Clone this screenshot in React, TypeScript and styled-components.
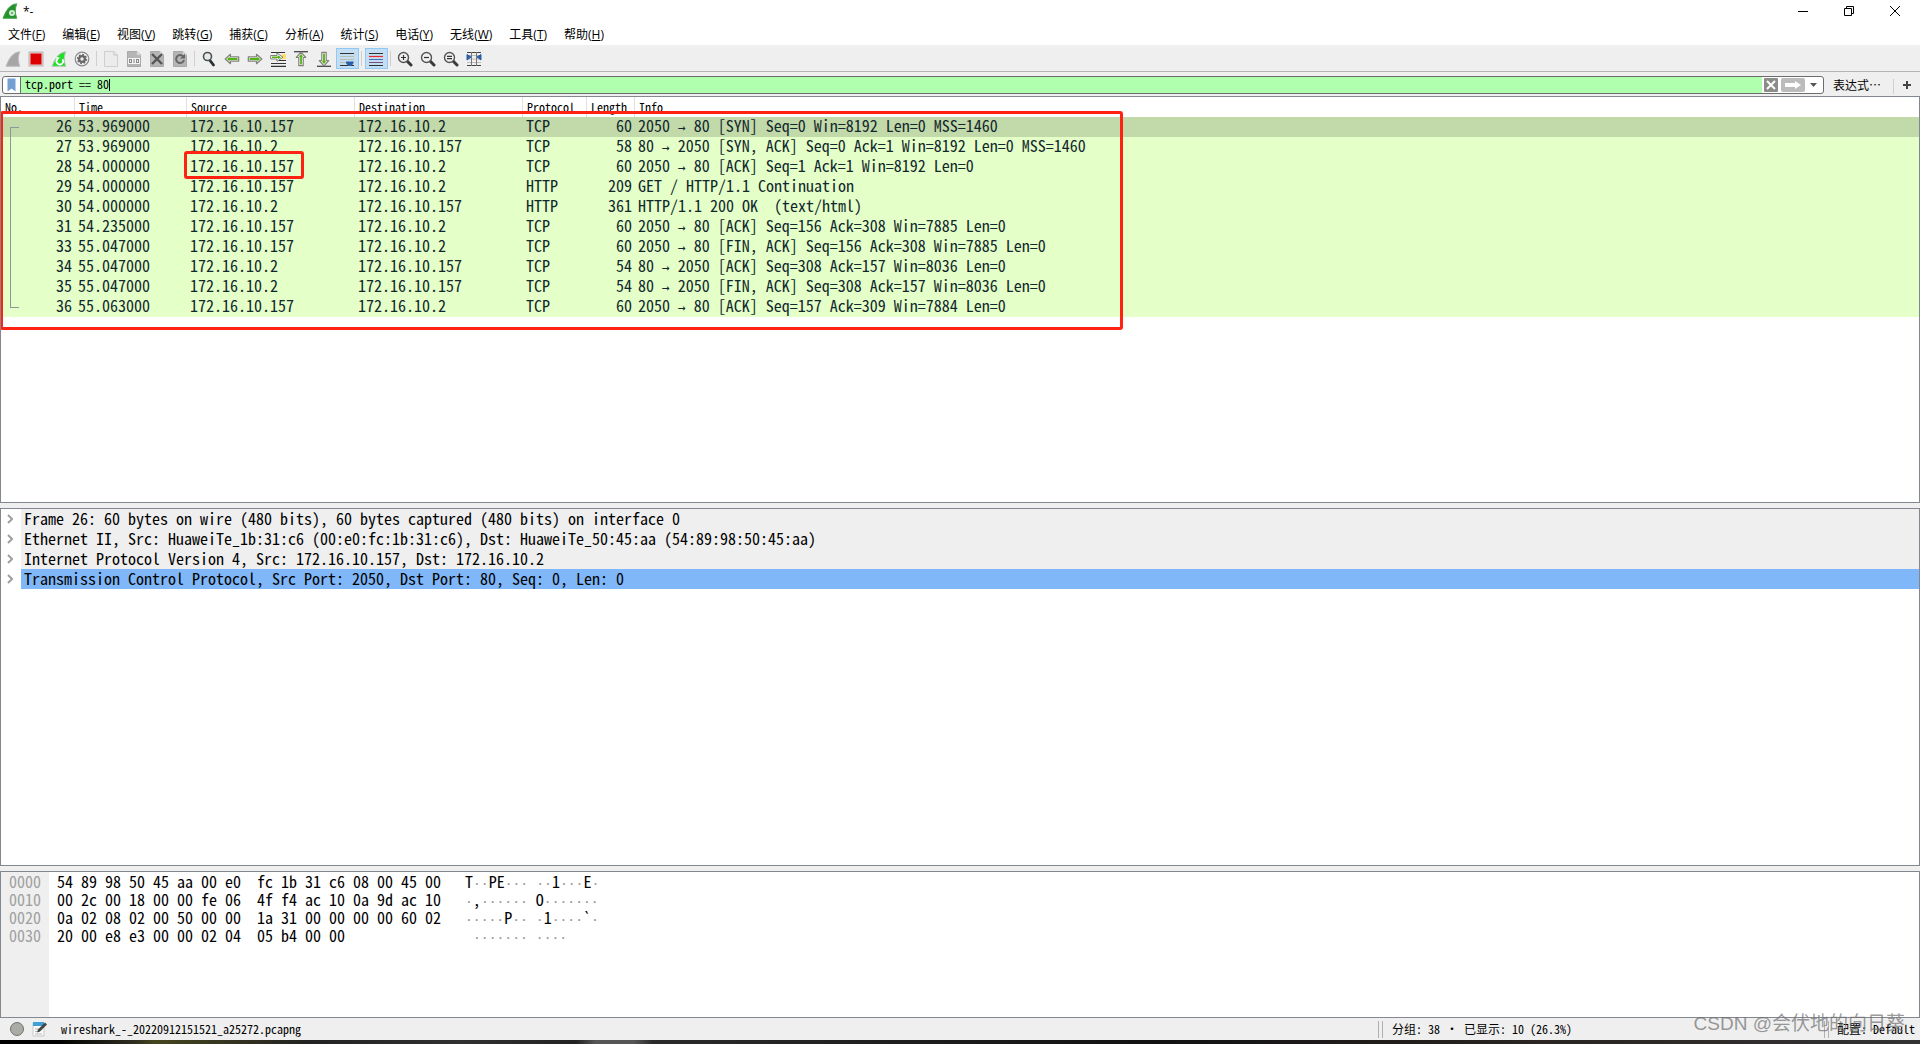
import React from "react";
import styled, { createGlobalStyle, css } from "styled-components";

const MONO = `"Noto Sans Mono CJK SC", "DejaVu Sans Mono", monospace`;
const UI = `"Open Sans", "Noto Sans CJK SC", sans-serif`;

const GlobalStyle = createGlobalStyle`
  *, *::before, *::after { box-sizing: border-box; }
  body { margin: 0; background: #efefef; color: #000; font-family: ${UI}; }
  button, input { font: inherit; color: inherit; margin: 0; padding: 0; border: 0; background: none; }
  svg { display: block; }
`;

const Window = styled.div`
  display: flex;
  flex-direction: column;
  min-height: 100vh;
  position: relative;
`;

const TitleBar = styled.header`
  display: flex;
  align-items: center;
  height: 22px;
  padding: 0 2px;
  background: #fff;
  font-size: 12px;
`;
const Title = styled.h1`
  flex: 1;
  margin: 0 0 0 5px;
  font-size: 12px;
  font-weight: 400;
`;
const WindowButton = styled.button`
  display: grid;
  place-items: center;
  width: 46px;
  height: 20px;
`;

const MenuBar = styled.nav`
  display: flex;
  gap: 1px;
  height: 25px;
  padding-top: 2px;
  background: #fff;
  border-bottom: 2px solid #f0f0f0;
`;
const MenuButton = styled.button`
  padding: 0 8px;
  font-size: 12px;
  line-height: 21px;
  white-space: nowrap;
`;

const ToolBar = styled.div`
  display: flex;
  height: 25px;
  padding: 1px 0 0 2px;
  border-bottom: 1px solid #b4b4b4;
`;
const ToolButton = styled.button<{ $on?: boolean }>`
  display: flex;
  width: 23px;
  height: 21px;
  padding: 2px;
  border: 1px solid transparent;
  ${(p) => p.$on && css`background: #c3ddf2; border-color: #90c8f6;`}
`;
const Separator = styled.span`
  width: 1px;
  height: 15px;
  margin: 3px 3px 0 2px;
  background: #cfcfcf;
`;

const FilterBar = styled.form`
  display: flex;
  align-items: center;
  height: 23px;
  padding: 0 5px 0 2px;
  margin-top: 1px;
`;
const FilterBox = styled.div`
  flex: 1;
  display: flex;
  align-items: center;
  height: 18px;
  background: #fff;
  border: 1px solid #6c6c6c;
  border-radius: 3px;
  overflow: hidden;
`;
const BookmarkButton = styled.button`
  display: grid;
  place-items: center;
  width: 18px;
  height: 16px;
  border-right: 1px solid #6c6c6c;
`;
const FilterField = styled.label`
  flex: 1;
  display: flex;
  align-items: center;
  height: 16px;
  padding-left: 4px;
  background: #afffaf;
`;
const FilterInput = styled.input`
  width: 14ch;
  height: 16px;
  padding-bottom: 2px;
  font-family: ${MONO};
  font-size: 12px;
  outline: 0;
`;
const Caret = styled.span`
  width: 1px;
  height: 12px;
  background: #000;
`;
const ClearButton = styled.button`
  display: grid;
  place-items: center;
  width: 14px;
  height: 14px;
  margin-left: 2px;
  border-radius: 1px;
  background: #8b8d88;
`;
const ApplyButton = styled.button`
  display: grid;
  place-items: center;
  width: 24px;
  height: 14px;
  margin-left: 3px;
  border-radius: 2px;
  background: #bcbcbc;
`;
const HistoryButton = styled.button`
  display: grid;
  place-items: center;
  width: 18px;
  height: 14px;
`;
const ExpressionButton = styled.button`
  padding: 0 10px 0 9px;
  font-family: ${MONO};
  font-size: 12px;
  line-height: 18px;
  white-space: nowrap;
`;
const AddButton = styled.button`
  display: grid;
  place-items: center;
  width: 16px;
  height: 18px;
  margin-left: 2px;
`;

const Pane = styled.section<{ $share: number }>`
  position: relative;
  flex: ${(p) => p.$share} 1 0;
  background: #fff;
  border: 1px solid #828790;
  font-family: ${MONO};
  font-size: 16px;
  overflow: hidden;
  & + & { margin-top: 5px; }
`;

const PacketTable = styled.table`
  width: 100%;
  table-layout: fixed;
  border-collapse: separate;
  border-spacing: 0;
`;
const HeadCell = styled.th`
  height: 20px;
  padding: 2px 0 0 4px;
  font-size: 12px;
  font-weight: 400;
  line-height: 16px;
  text-align: left;
  vertical-align: top;
  border-right: 1px solid #e0e0e0;
  &:last-child { border-right: 0; }
`;
const Column = styled.col<{ $width?: number }>`
  width: ${(p) => (p.$width ? `${p.$width}px` : "auto")};
`;
const PacketRow = styled.tr<{ $selected: boolean }>`
  background: ${(p) => (p.$selected ? "#c2d9a9" : "#e4ffc7")};
  color: #12272e;
`;
const Cell = styled.td<{ $right?: boolean }>`
  height: 20px;
  padding: ${(p) => (p.$right ? "0 3px 0 0" : "0 0 0 3px")};
  line-height: 16px;
  text-align: ${(p) => (p.$right ? "right" : "left")};
  vertical-align: top;
  white-space: pre;
`;
const Narrow = styled.span`
  font-family: "DejaVu Sans Mono", monospace;
  font-size: 13px;
  line-height: 1;
`;
const ConversationBracket = styled.span`
  position: absolute;
  left: 9px;
  top: 30px;
  width: 9px;
  height: 181px;
  border: 1px solid #8b9799;
  border-right: 0;
`;
const Marker = styled.span<{ $x: number; $y: number; $w: number; $h: number }>`
  position: absolute;
  left: ${(p) => p.$x}px;
  top: ${(p) => p.$y}px;
  width: ${(p) => p.$w}px;
  height: ${(p) => p.$h}px;
  border: 3px solid #ff2111;
  border-radius: 3px;
`;

const DetailList = styled.ul`
  margin: 0;
  padding: 0;
  list-style: none;
`;
const DetailRow = styled.li`
  display: flex;
  height: 20px;
`;
const Expander = styled.button`
  display: grid;
  place-items: center;
  width: 20px;
  padding-right: 2px;
`;
const DetailText = styled.span<{ $selected: boolean }>`
  flex: 1;
  padding-left: 3px;
  line-height: 18px;
  white-space: pre;
  background: ${(p) => (p.$selected ? "#80b7f8" : "#efefef")};
`;

const HexPane = styled(Pane)`
  display: flex;
`;
const Offsets = styled.pre`
  margin: 0;
  padding: 0 8px;
  background: #efefef;
  color: #a0a0a0;
  font: inherit;
  line-height: 18px;
`;
const Bytes = styled.pre`
  margin: 0;
  padding-left: 8px;
  font: inherit;
  line-height: 18px;
`;
const Faint = styled(Narrow)`
  color: #a0928e;
`;

const StatusBar = styled.footer`
  display: flex;
  align-items: center;
  height: 22px;
  padding: 0 5px 0 9px;
  font-family: ${MONO};
  font-size: 12px;
  line-height: 18px;
  white-space: pre;
`;
const StatusButton = styled.button`
  display: grid;
  place-items: center;
  width: 16px;
  height: 16px;
  margin-right: 7px;
`;
const StatusText = styled.span<{ $grow?: number; $gap: number }>`
  flex: ${(p) => p.$grow ?? 0} 0 auto;
  padding-left: ${(p) => p.$gap}px;
`;
const StatusCounts = styled.span`
  flex: 0 0 441px;
  padding-left: 9px;
`;
const Grip = styled.span`
  width: 5px;
  height: 17px;
  border: solid #b0b0b0;
  border-width: 0 1px;
`;
const Watermark = styled.span`
  position: absolute;
  right: 15px;
  bottom: 6px;
  font-family: "Liberation Sans", "Noto Sans CJK SC", sans-serif;
  font-size: 19px;
  line-height: 28px;
  color: rgba(110, 110, 110, 0.7);
  white-space: nowrap;
`;
const TaskbarEdge = styled.div`
  height: 4px;
  background: linear-gradient(90deg, #000 0 3%, #2d2d20 7%, #454520 8%, #222 16%, #303030 24%, #222 30%, #555 31% 33%, #2a2a2a 34%, #111 60%, #2a2424 80%, #333 100%);
`;

const Fin = ({ fill, edge, children }: { fill: string; edge: string; children?: React.ReactNode }) => (
  <svg width="16" height="16" viewBox="0 0 16 16">
    <path d="M1 15.300C4 8 7 1.500 14.800 0.800C13 5 12.800 10 14.800 15.300Z" fill={fill} stroke={edge} />
    {children}
  </svg>
);

const Doc = ({ children, pale }: { children?: React.ReactNode; pale?: boolean }) => (
  <svg width="16" height="16" viewBox="0 0 16 16">
    <path d="M1.500 .5H11L14.500 4V15.500H1.500Z" fill={pale ? "#ececec" : "#b5b5b5"} stroke={pale ? "#cfcfcf" : "#a8a8a8"} />
    <path d="M11 .5V4H14.500" fill="#eee" stroke="#c2c2c2" />
    {children}
  </svg>
);

const Lens = ({ children }: { children?: React.ReactNode }) => (
  <svg width="16" height="16" viewBox="0 0 16 16">
    <path d="M9.800 9.800L14 14" stroke="#3a3a3a" strokeWidth="3" strokeLinecap="round" />
    <circle cx="6.500" cy="6.500" r="5" fill="#eef0ee" stroke="#555" strokeWidth="1.400" />
    <g stroke="#333" strokeWidth="1.200">{children}</g>
  </svg>
);

const Arrow = ({ turn = 0, children }: { turn?: number; children?: React.ReactNode }) => (
  <svg width="16" height="16" viewBox="0 0 16 16">
    {children}
    <g transform={`rotate(${turn} 8 8)`}>
      <path d="M1.200 8L6.500 3.300V5.800H14.700V10.200H6.500V12.700Z" fill="#fff" stroke="#7f817b" strokeWidth="1.200" strokeLinejoin="round" />
      <path d="M3 8L5.700 5.600V7.100H13.500V8.900H5.700V10.400Z" fill="#55b312" />
    </g>
  </svg>
);

const ToolIcons: Record<string, React.ReactNode> = {
  start: <Fin fill="#a6a6a6" edge="#bdbdbd" />,
  stop: (
    <svg width="16" height="16"><rect x="1" y="1" width="14" height="14" fill="#e8c8c8" stroke="#b8b8b8" /><rect x="2.500" y="2.500" width="11" height="11" fill="#dd0000" /></svg>
  ),
  restart: (
    <Fin fill="#25dc2b" edge="#b5ccb5">
      <path d="M6.200 8.200A3.300 3.300 0 1 0 11.400 8.200" fill="none" stroke="#fff" strokeWidth="1.700" />
      <path d="M4.800 6L8.800 6.400L6.300 9.600Z" fill="#fff" />
    </Fin>
  ),
  options: (
    <svg width="16" height="16" viewBox="0 0 16 16">
      <circle cx="8" cy="8" r="6.800" fill="#eee" stroke="#888" strokeWidth="1.200" />
      <circle cx="8" cy="8" r="4" fill="#686868" />
      <circle cx="8" cy="8" r="4.400" fill="none" stroke="#686868" strokeDasharray="1.700 1.700" strokeWidth="1.500" />
      <circle cx="8" cy="8" r="1.700" fill="#eee" />
    </svg>
  ),
  open: <Doc pale />,
  save: (
    <Doc>
      <rect x="2" y="7" width="12" height="6" fill="#f4f4f4" />
      <g fill="none" stroke="#888"><rect x="3.500" y="8.500" width="2" height="3" /><path d="M8 8V12" /><rect x="10.500" y="8.500" width="2" height="3" /></g>
    </Doc>
  ),
  close: <Doc><path d="M3 3L13 13M13 3L3 13" stroke="#555" strokeWidth="2.400" /></Doc>,
  reload: (
    <Doc>
      <path d="M11.200 5.500A4 4 0 1 0 12 9" fill="none" stroke="#666" strokeWidth="2" />
      <path d="M13 2.500V7.500H8Z" fill="#666" />
    </Doc>
  ),
  find: (
    <svg width="16" height="16" viewBox="0 0 16 16">
      <path d="M8.500 8.800L12.500 14" stroke="#2c3033" strokeWidth="2.800" strokeLinecap="round" />
      <circle cx="6.500" cy="5.500" r="4" fill="#e6e9ea" stroke="#4a4f52" strokeWidth="1.600" />
    </svg>
  ),
  back: <Arrow />,
  forward: <Arrow turn={180} />,
  goto: (
    <svg width="16" height="16" viewBox="0 0 16 16">
      <path d="M1 1.500H15M8 9.500H16M1 12.500H16M1 15.300H16" stroke="#333" strokeWidth="1.200" />
      <rect x="12" y="3" width="4" height="5" fill="#ffe06a" />
      <path d="M.7 4.500H7V2L13 6.200L7 10.400V8H.7Z" fill="#fff" stroke="#7f817b" strokeLinejoin="round" />
      <path d="M2 5.500H8V4.200L11 6.200L8 8.200V7H2Z" fill="#55b312" />
    </svg>
  ),
  first: <Arrow turn={90}><path d="M1 .700H15" stroke="#444" strokeWidth="1.300" /></Arrow>,
  last: <Arrow turn={270}><path d="M1 15.300H15" stroke="#444" strokeWidth="1.300" /></Arrow>,
  autoscroll: (
    <svg width="16" height="16" viewBox="0 0 16 16">
      <path d="M1 2.500H15M1 14.500H15" stroke="#2e3436" strokeWidth="1.200" />
      <path d="M1 5.500H15M1 8.500H15M1 11.500H15" stroke="#b9bdb0" />
      <path d="M7 10.500H14.500V12L12.500 15H9L7 12Z" fill="#2a5fa8" />
    </svg>
  ),
  colorize: (
    <svg width="16" height="16" viewBox="0 0 16 16">
      <path d="M1 2.500H15M1 14.500H15" stroke="#2e3436" strokeWidth="1.200" />
      <path d="M1 5.500H15" stroke="#ef2929" strokeWidth="1.200" />
      <path d="M1 8.500H15" stroke="#4a6cb0" /><path d="M1 11.500H15" stroke="#75507b" />
    </svg>
  ),
  zoomIn: <Lens><path d="M4 6.500H9M6.500 4V9" /></Lens>,
  zoomOut: <Lens><path d="M4 6.500H9" /></Lens>,
  zoomReset: <Lens><path d="M4 5.300H9M4 7.700H9" /></Lens>,
  resize: (
    <svg width="16" height="16" viewBox="0 0 16 16">
      <path d="M1 1.500H15M1 14.500H15" stroke="#444" />
      <path d="M1 4.500H15M1 8H15M1 11.500H15" stroke="#bbb" />
      <path d="M5.500 1V15M10.500 1V15" stroke="#777" />
      <path d="M1 3.500L5 6L1 9ZM15 3.500L11 6L15 9Z" fill="#2a5fa8" stroke="#2a5fa8" />
    </svg>
  ),
};

const toolGroups: [string, string][][] = [
  [["start", "开始捕获"], ["stop", "停止捕获"], ["restart", "重新开始捕获"], ["options", "捕获选项"]],
  [["open", "打开"], ["save", "保存"], ["close", "关闭"], ["reload", "重新加载"]],
  [["find", "查找分组"], ["back", "后退"], ["forward", "前进"], ["goto", "转到分组"], ["first", "首个分组"], ["last", "最新分组"], ["autoscroll", "自动滚动"]],
  [["colorize", "着色分组"]],
  [["zoomIn", "放大"], ["zoomOut", "缩小"], ["zoomReset", "正常大小"], ["resize", "调整列宽"]],
];

const menus: [string, string][] = [
  ["文件", "F"], ["编辑", "E"], ["视图", "V"], ["跳转", "G"], ["捕获", "C"], ["分析", "A"],
  ["统计", "S"], ["电话", "Y"], ["无线", "W"], ["工具", "T"], ["帮助", "H"],
];

const columns: [string, number?][] = [
  ["No.", 74], ["Time", 112], ["Source", 168], ["Destination", 168], ["Protocol", 64], ["Length", 48], ["Info"],
];

const A = "172.16.10.157";
const B = "172.16.10.2";
const packets: [number, string, string, string, string, number, string][] = [
  [26, "53.969000", A, B, "TCP", 60, "2050 → 80 [SYN] Seq=0 Win=8192 Len=0 MSS=1460"],
  [27, "53.969000", B, A, "TCP", 58, "80 → 2050 [SYN, ACK] Seq=0 Ack=1 Win=8192 Len=0 MSS=1460"],
  [28, "54.000000", A, B, "TCP", 60, "2050 → 80 [ACK] Seq=1 Ack=1 Win=8192 Len=0"],
  [29, "54.000000", A, B, "HTTP", 209, "GET / HTTP/1.1 Continuation"],
  [30, "54.000000", B, A, "HTTP", 361, "HTTP/1.1 200 OK  (text/html)"],
  [31, "54.235000", A, B, "TCP", 60, "2050 → 80 [ACK] Seq=156 Ack=308 Win=7885 Len=0"],
  [33, "55.047000", A, B, "TCP", 60, "2050 → 80 [FIN, ACK] Seq=156 Ack=308 Win=7885 Len=0"],
  [34, "55.047000", B, A, "TCP", 54, "80 → 2050 [ACK] Seq=308 Ack=157 Win=8036 Len=0"],
  [35, "55.047000", B, A, "TCP", 54, "80 → 2050 [FIN, ACK] Seq=308 Ack=157 Win=8036 Len=0"],
  [36, "55.063000", A, B, "TCP", 60, "2050 → 80 [ACK] Seq=157 Ack=309 Win=7884 Len=0"],
];

const details = [
  "Frame 26: 60 bytes on wire (480 bits), 60 bytes captured (480 bits) on interface 0",
  "Ethernet II, Src: HuaweiTe_1b:31:c6 (00:e0:fc:1b:31:c6), Dst: HuaweiTe_50:45:aa (54:89:98:50:45:aa)",
  "Internet Protocol Version 4, Src: 172.16.10.157, Dst: 172.16.10.2",
  "Transmission Control Protocol, Src Port: 2050, Dst Port: 80, Seq: 0, Len: 0",
];

const dump: [string, string][] = [
  ["54 89 98 50 45 aa 00 e0  fc 1b 31 c6 08 00 45 00", "T··PE··· ··1···E·"],
  ["00 2c 00 18 00 00 fe 06  4f f4 ac 10 0a 9d ac 10", "·,······ O·······"],
  ["0a 02 08 02 00 50 00 00  1a 31 00 00 00 00 60 02", "·····P·· ·1····`·"],
  ["20 00 e8 e3 00 00 02 04  05 b4 00 00", " ······· ····"],
];

// Arrows and middle dots are full-width in the CJK face, so they take the half-width face.
const HalfWidth = ({ text }: { text: string }) => (
  <>
    {text.split(/(·+|→)/).map((part, i) => {
      if (part === "→") return <Narrow key={i}>{part}</Narrow>;
      return part.startsWith("·") ? <Faint key={i}>{part}</Faint> : part;
    })}
  </>
);

export default function App() {
  const [filter, setFilter] = React.useState("tcp.port == 80");
  const [selected, setSelected] = React.useState(26);
  return (
    <Window>
      <GlobalStyle />
      <TitleBar>
        <Fin fill="#23912c" edge="#4aa84c">
          <circle cx="10" cy="10" r="3" fill="#d5ecd5" />
          <circle cx="10" cy="10" r="1.200" fill="#6fb573" />
        </Fin>
        <Title>*-</Title>
        <WindowButton aria-label="最小化"><svg width="10" height="10"><path d="M0 5.500H10" stroke="#000" /></svg></WindowButton>
        <WindowButton aria-label="还原">
          <svg width="10" height="10" fill="none" stroke="#000"><path d="M.5 2.500H7.500V9.500H.5ZM2.500 2.500V.5H9.500V7.500H7.500" /></svg>
        </WindowButton>
        <WindowButton aria-label="关闭窗口"><svg width="10" height="10"><path d="M0 0L10 10M10 0L0 10" stroke="#000" /></svg></WindowButton>
      </TitleBar>
      <MenuBar>
        {menus.map(([name, key]) => (
          <MenuButton key={key}>{name}(<u>{key}</u>)</MenuButton>
        ))}
      </MenuBar>
      <ToolBar>
        {toolGroups.map((group, i) => (
          <React.Fragment key={i}>
            {i > 0 && <Separator />}
            {group.map(([id, label]) => (
              <ToolButton key={id} aria-label={label} $on={id === "autoscroll" || id === "colorize"}>{ToolIcons[id]}</ToolButton>
            ))}
          </React.Fragment>
        ))}
      </ToolBar>
      <FilterBar onSubmit={(e) => e.preventDefault()}>
        <FilterBox>
          <BookmarkButton type="button" aria-label="书签">
            <svg width="9" height="14"><path d="M.5 .5H8.500V13.500L4.500 10.500L.5 13.500Z" fill="#739fd3" /></svg>
          </BookmarkButton>
          <FilterField>
            <FilterInput aria-label="显示过滤器" value={filter} onChange={(e) => setFilter(e.target.value)} />
            <Caret />
          </FilterField>
          <ClearButton type="button" aria-label="清除">
            <svg width="10" height="10"><path d="M1 1L9 9M9 1L1 9" stroke="#fff" strokeWidth="2" /></svg>
          </ClearButton>
          <ApplyButton aria-label="应用">
            <svg width="16" height="8"><path d="M0 2H10V0L16 4L10 8V6H0Z" fill="#fff" /></svg>
          </ApplyButton>
          <HistoryButton type="button" aria-label="历史">
            <svg width="7" height="4"><path d="M0 0H7L3.500 4Z" fill="#555" /></svg>
          </HistoryButton>
        </FilterBox>
        <ExpressionButton type="button">表达式…</ExpressionButton>
        <Separator />
        <AddButton type="button" aria-label="添加">
          <svg width="8" height="8"><path d="M4 0V8M0 4H8" stroke="#444" strokeWidth="2" /></svg>
        </AddButton>
      </FilterBar>

      <Pane $share={405}>
        <PacketTable>
          <colgroup>{columns.map(([name, width]) => <Column key={name} $width={width} />)}</colgroup>
          <thead><tr>{columns.map(([name]) => <HeadCell key={name}>{name}</HeadCell>)}</tr></thead>
          <tbody>
            {packets.map((row) => (
              <PacketRow key={row[0]} $selected={row[0] === selected} onClick={() => setSelected(row[0])}>
                {row.map((value, i) => (
                  <Cell key={i} $right={i === 0 || i === 5}><HalfWidth text={String(value)} /></Cell>
                ))}
              </PacketRow>
            ))}
          </tbody>
        </PacketTable>
        <ConversationBracket />
        <Marker $x={-1} $y={14} $w={1123} $h={219} />
        <Marker $x={183} $y={54} $w={120} $h={28} />
      </Pane>

      <Pane $share={356}>
        <DetailList>
          {details.map((text, i) => (
            <DetailRow key={text}>
              <Expander aria-label="展开">
                <svg width="6" height="10" fill="none"><path d="M1 1L5 5L1 9" stroke="#a0a0a0" strokeWidth="2" /></svg>
              </Expander>
              <DetailText $selected={i === 3}>{text}</DetailText>
            </DetailRow>
          ))}
        </DetailList>
      </Pane>

      <HexPane $share={145}>
        <Offsets>{dump.map((_, i) => `00${i}0`).join("\n")}</Offsets>
        <Bytes>
          {dump.map(([hex, text], i) => (
            <React.Fragment key={i}>{hex.padEnd(51)}<HalfWidth text={text} />{"\n"}</React.Fragment>
          ))}
        </Bytes>
      </HexPane>

      <StatusBar>
        <StatusButton aria-label="专家信息">
          <svg width="16" height="16"><circle cx="8" cy="8" r="6.500" fill="#a9aba5" stroke="#70736c" /></svg>
        </StatusButton>
        <StatusButton aria-label="捕获文件注释">
          <svg width="16" height="16" viewBox="0 0 16 16">
            <path d="M1 2H12V15H1Z" fill="#fafafa" stroke="#c8c8c8" />
            <path d="M1 1H12V5H1Z" fill="#3f9fd6" />
            <path d="M3 8H9M3 10.500H8M3 13H10" stroke="#bbb" />
            <path d="M5 11.500L6 8.500L13 1.500L15 3.500L8 10.500Z" fill="#444" />
          </svg>
        </StatusButton>
        <StatusText $grow={1} $gap={6}>wireshark_-_20220912151521_a25272.pcapng</StatusText>
        <Grip />
        <StatusCounts>分组: 38 · 已显示: 10 (26.3%)</StatusCounts>
        <Grip />
        <StatusText $gap={8}>配置: Default</StatusText>
      </StatusBar>
      <TaskbarEdge />
      <Watermark>CSDN @会伏地的向日葵</Watermark>
    </Window>
  );
}
